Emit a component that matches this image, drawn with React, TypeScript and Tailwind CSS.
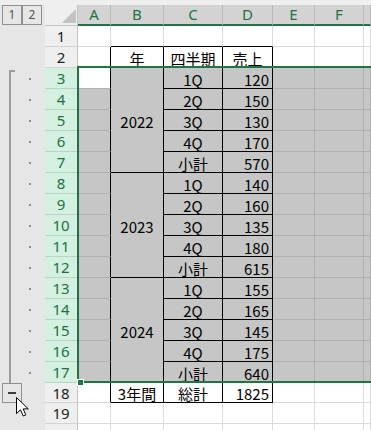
import React from "react";

type Edge = "k" | "s" | "n";

const RIGHT: Record<Edge, string> = {
  k: "border-r-black",
  s: "border-r-[#b0b0b0]",
  n: "border-r-[#dadada]",
};
const BOTTOM: Record<Edge, string> = {
  k: "border-b-black",
  s: "border-b-[#b0b0b0]",
  n: "border-b-[#dadada]",
};

const groups = [
  { year: "2022", rows: [["1Q", "120"], ["2Q", "150"], ["3Q", "130"], ["4Q", "170"], ["小計", "570"]] },
  { year: "2023", rows: [["1Q", "140"], ["2Q", "160"], ["3Q", "135"], ["4Q", "180"], ["小計", "615"]] },
  { year: "2024", rows: [["1Q", "155"], ["2Q", "165"], ["3Q", "145"], ["4Q", "175"], ["小計", "640"]] },
];

function Cell({
  sel = false,
  r = "n",
  b = "n",
  align = "center",
  span = false,
  children,
}: {
  sel?: boolean;
  r?: Edge;
  b?: Edge;
  align?: "center" | "right";
  span?: boolean;
  children?: React.ReactNode;
}) {
  return (
    <div
      className={`flex items-center overflow-hidden whitespace-nowrap border-r border-b pt-[2px] font-['Noto_Sans_CJK_JP',sans-serif] text-[15px] leading-none text-black ${
        sel ? "bg-[#c6c6c6]" : "bg-white"
      } ${RIGHT[r]} ${BOTTOM[b]} ${align === "right" ? "justify-end pr-[3px]" : "justify-center"} ${
        span ? "row-span-5" : ""
      }`}
    >
      {children}
    </div>
  );
}

function RowHdr({ n, sel = false }: { n?: number; sel?: boolean }) {
  return (
    <div
      className={`flex items-center justify-center border-r border-b border-r-[#c4c4c4] pt-[1px] font-['Noto_Sans',sans-serif] text-[15px] leading-none ${
        sel ? "border-b-[#b7d6c3] bg-[#d3f0e0] text-[#1e7145]" : "border-b-[#d4d4d4] bg-[#efefef] text-[#222]"
      }`}
    >
      {n}
    </div>
  );
}

function OutlineCell({ first = false }: { first?: boolean }) {
  return (
    <div className="flex items-center bg-[#e6e6e6]">
      {first ? (
        <div className="ml-[9px] h-[19px] w-[6px] self-end border-l-2 border-t-2 border-[#9c9c9c]" />
      ) : (
        <div className="ml-[9px] w-[2px] self-stretch bg-[#9c9c9c]" />
      )}
      <div className={`h-[2px] w-[2px] bg-[#8c8c8c] ${first ? "ml-[14px]" : "ml-[18px]"}`} />
    </div>
  );
}

function ColHdr({ label }: { label?: string }) {
  return (
    <div className="flex items-center justify-center border-r border-b-2 border-r-[#bababa] border-b-[#217346] bg-[#d3d3d3] font-['Noto_Sans',sans-serif] text-[15px] leading-none text-[#1e7145]">
      {label}
    </div>
  );
}

function PlainRow({ n }: { n?: number }) {
  return (
    <>
      <div className="bg-[#e6e6e6]" />
      <RowHdr n={n} />
      <Cell />
      <Cell />
      <Cell />
      <Cell />
      <Cell />
      <Cell />
      <Cell />
    </>
  );
}

export default function App() {
  return (
    <div className="relative h-[430px] w-[371px] overflow-hidden bg-white">
      <div className="h-[5px] bg-[#efefef]" />
      <div className="grid grid-cols-[45px_33px_33px_53px_59px_50px_42px_49px_1fr] grid-rows-[repeat(18,21px)_20px_repeat(2,21px)]">
        {/* header */}
        <div className="flex items-start bg-[#e6e6e6] pl-[2px]">
          {["1", "2"].map((l) => (
            <div
              key={l}
              className="flex h-[20px] w-[20px] items-center justify-center border border-[#8f8f8f] font-['Noto_Sans',sans-serif] text-[12px] leading-none text-[#555]"
            >
              {l}
            </div>
          ))}
        </div>
        <div className="flex items-end justify-end border-r border-b border-[#c4c4c4] bg-[#efefef] pr-[1px] pb-[2px]">
          <svg width="14" height="14" viewBox="0 0 14 14">
            <polygon points="14,0 14,14 0,14" fill="#c2c2c2" />
          </svg>
        </div>
        <ColHdr label="A" />
        <ColHdr label="B" />
        <ColHdr label="C" />
        <ColHdr label="D" />
        <ColHdr label="E" />
        <ColHdr label="F" />
        <ColHdr />

        {/* row 1 */}
        <div className="bg-[#e6e6e6]" />
        <RowHdr n={1} />
        <Cell />
        <Cell b="k" />
        <Cell b="k" />
        <Cell b="k" />
        <Cell />
        <Cell />
        <Cell />

        {/* row 2 */}
        <div className="bg-[#e6e6e6]" />
        <RowHdr n={2} />
        <Cell r="k" />
        <Cell r="k" b="k">年</Cell>
        <Cell r="k" b="k">四半期</Cell>
        <Cell r="k" b="k">売上</Cell>
        <Cell />
        <Cell />
        <Cell />

        {/* rows 3-17 */}
        {groups.flatMap((g, gi) =>
          g.rows.map(([q, v], i) => {
            const n = 3 + gi * 5 + i;
            return (
              <React.Fragment key={n}>
                <OutlineCell first={n === 3} />
                <RowHdr n={n} sel />
                <Cell sel={n !== 3} r="k" b="s" />
                {i === 0 && (
                  <Cell sel r="k" b="k" span>
                    {g.year}
                  </Cell>
                )}
                <Cell sel r="k" b="k">
                  {q}
                </Cell>
                <Cell sel r="k" b="k" align="right">
                  {v}
                </Cell>
                <Cell sel r="s" b="s" />
                <Cell sel r="s" b="s" />
                <Cell sel r="s" b="s" />
              </React.Fragment>
            );
          })
        )}

        {/* row 18 */}
        <div className="bg-[#e6e6e6] pl-[2px]">
          <div className="flex h-[20px] w-[20px] items-center justify-center border border-[#8f8f8f]">
            <div className="h-[2px] w-[8px] bg-[#3c3c3c]" />
          </div>
        </div>
        <RowHdr n={18} />
        <Cell r="k" />
        <Cell r="k" b="k">3年間</Cell>
        <Cell r="k" b="k">総計</Cell>
        <Cell r="k" b="k" align="right">1825</Cell>
        <Cell />
        <Cell />
        <Cell />

        <PlainRow n={19} />
        <PlainRow />
      </div>

      {/* selection border */}
      <div className="absolute left-[77px] top-[66px] h-[317px] w-[320px] border-2 border-[#217346]" />
      <div className="absolute left-[77px] top-[379px] h-[7px] w-[7px] border border-white bg-[#217346]" />

      {/* mouse pointer */}
      <svg className="absolute left-[16px] top-[397px]" width="14" height="21" viewBox="0 0 14 21">
        <path
          d="M0.5 0.5 L0.5 16.5 L4.5 12.8 L7.2 19 L9.8 17.9 L7.2 11.9 L12.3 11.9 Z"
          fill="#fff"
          stroke="#000"
          strokeWidth="1"
          strokeLinejoin="miter"
        />
      </svg>
    </div>
  );
}
